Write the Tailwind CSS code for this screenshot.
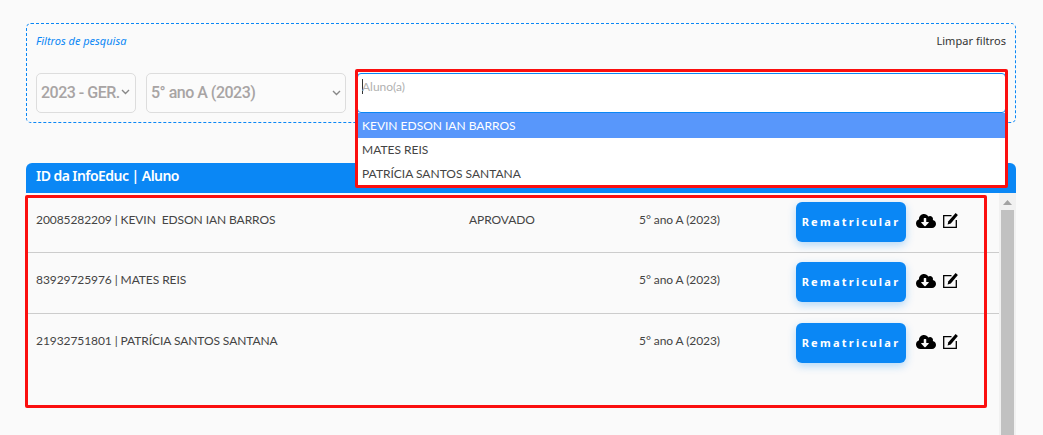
<!doctype html>
<html lang="pt">
<head>
<meta charset="utf-8">
<script src="https://cdn.jsdelivr.net/npm/@tailwindcss/browser@4"></script>
</head>
<body class="bg-[#fafafa] font-['Lato',sans-serif] text-[#444] overflow-hidden">
<div class="relative w-[1043px] h-[435px] overflow-hidden pl-[26px] pr-[27px] pt-[23px]">
  <!-- filters -->
  <section class="relative h-[100px] rounded-[5px] border border-dashed border-[#0a87f5] px-[9px]">
    <div class="flex justify-between pt-[9px] h-[49px]">
      <span class="font-['Noto_Sans',sans-serif] italic text-[#0a87f5] text-[11px] leading-[16px]">Filtros de pesquisa</span>
      <span class="font-['Noto_Sans',sans-serif] text-[#333] text-[11px] tracking-[0.05px] leading-[16px]">Limpar filtros</span>
    </div>
    <div class="flex gap-[10px] items-start">
      <div class="w-[100px] h-[40px] rounded-[5px] border border-[#ddd] bg-[#fbfbfb] pl-[4px] flex items-center justify-between pr-[5px] font-['Roboto',sans-serif] font-medium text-[16px] tracking-[-0.5px] text-[#a8a4a4]">
        <span class="whitespace-nowrap">2023 - GER.</span>
        <svg width="9" height="6" viewBox="0 0 9 6" fill="none" stroke="#888" stroke-width="1.4" class="-mt-[3px]"><path d="M1 1l3.5 3.5L8 1"/></svg>
      </div>
      <div class="w-[200px] h-[40px] rounded-[5px] border border-[#ddd] bg-[#fbfbfb] pl-[4px] flex items-center justify-between pr-[4px] font-['Roboto',sans-serif] font-medium text-[16px] tracking-[-0.5px] text-[#a8a4a4]">
        <span>5° ano A (2023)</span>
        <svg width="9" height="6" viewBox="0 0 9 6" fill="none" stroke="#888" stroke-width="1.4"><path d="M1 1l3.5 3.5L8 1"/></svg>
      </div>
      <div class="relative ml-px w-[649px]">
        <div class="h-[40px] rounded-[4px] border border-[#0a87f5] bg-white pl-[4px] pt-[4px] text-[12px] leading-[18px] text-[#b0b0b0] flex items-start">
          <span class="inline-block w-px h-[15px] bg-[#333] mt-px"></span><span class="-ml-px">Aluno(a)</span>
        </div>
        <ul class="absolute left-0 right-0 top-[40px] z-10 h-[73px] bg-white text-[12px] text-[#444]">
          <li class="h-[25px] bg-[#5897fb] text-white pl-[5px] leading-[25px]">KEVIN EDSON IAN BARROS</li>
          <li class="h-[24px] pl-[5px] leading-[24px]">MATES REIS</li>
          <li class="h-[24px] pl-[5px] leading-[24px]">PATRÍCIA SANTOS SANTANA</li>
        </ul>
      </div>
    </div>
  </section>

  <!-- table -->
  <section class="mt-[40px]">
    <div class="h-[30px] rounded-t-[6px] bg-[#0a87f5] px-[10px] font-['Noto_Sans',sans-serif] font-semibold text-[14px] tracking-[-0.55px] leading-[26px] text-white">ID da InfoEduc | Aluno</div>
    <div class="flex">
      <div class="w-[973px] text-[12px] tracking-[-0.08px] text-[#444]">
        <div class="h-[60px] border-b border-[#ccc] grid grid-cols-[433px_170px_157px_auto] pl-[10px] pt-[9px]">
          <span class="pt-[9px] leading-[18px]">20085282209 | KEVIN&nbsp; EDSON IAN BARROS</span>
          <span class="pt-[9px] leading-[18px]">APROVADO</span>
          <span class="pt-[9px] leading-[18px]">5° ano A (2023)</span>
          <div class="flex items-start">
            <button class="w-[110px] h-[40px] rounded-[6px] bg-[#0a87f5] shadow-[0_3px_8px_rgba(10,135,245,0.3)] font-['Noto_Sans',sans-serif] font-bold text-[11px] tracking-[2.25px] text-white">Rematricular</button>
            <svg class="ml-[10px] mt-[11px]" width="20" height="16" viewBox="0 0 640 512"><path fill="#000" d="M537.6 226.6c4.1-10.7 6.4-22.4 6.4-34.6 0-53-43-96-96-96-19.7 0-38.1 6-53.3 16.2C367 64.2 315.3 32 256 32c-88.4 0-160 71.6-160 160 0 2.700.1 5.400.2 8.100C40.200 219.800 0 273.200 0 336c0 79.500 64.500 144 144 144h368c70.700 0 128-57.300 128-128 0-61.900-44-113.600-102.400-125.400zm-132.900 88.700L299.300 420.700c-6.200 6.200-16.400 6.200-22.600 0L171.300 315.300c-10.100-10.100-2.900-27.300 11.300-27.300H248V176c0-8.800 7.200-16 16-16h48c8.800 0 16 7.200 16 16v112h65.400c14.200 0 21.400 17.200 11.300 27.300z"/></svg>
            <svg class="ml-[7px] mt-[10px]" width="15" height="16" viewBox="0 0 15 16" fill="none"><path d="M8.500 3.600H.7v11.700h12.600V8" stroke="#000" stroke-width="1.300"/><path fill="#000" d="M4.600 12.400l.8-3.200L12.600.9 14.900 3.100 7.800 11.400z"/></svg>
          </div>
        </div>
        <div class="h-[61px] border-b border-[#ccc] grid grid-cols-[433px_170px_157px_auto] pl-[10px] pt-[9px]">
          <span class="pt-[9px] leading-[18px]">83929725976 | MATES REIS</span>
          <span></span>
          <span class="pt-[9px] leading-[18px]">5° ano A (2023)</span>
          <div class="flex items-start">
            <button class="w-[110px] h-[40px] rounded-[6px] bg-[#0a87f5] shadow-[0_3px_8px_rgba(10,135,245,0.3)] font-['Noto_Sans',sans-serif] font-bold text-[11px] tracking-[2.25px] text-white">Rematricular</button>
            <svg class="ml-[10px] mt-[11px]" width="20" height="16" viewBox="0 0 640 512"><path fill="#000" d="M537.6 226.6c4.1-10.7 6.4-22.4 6.4-34.6 0-53-43-96-96-96-19.7 0-38.1 6-53.3 16.2C367 64.2 315.3 32 256 32c-88.4 0-160 71.6-160 160 0 2.700.1 5.400.2 8.100C40.200 219.800 0 273.200 0 336c0 79.500 64.500 144 144 144h368c70.700 0 128-57.300 128-128 0-61.900-44-113.600-102.400-125.400zm-132.900 88.700L299.300 420.700c-6.200 6.200-16.400 6.200-22.600 0L171.300 315.300c-10.100-10.100-2.900-27.300 11.300-27.300H248V176c0-8.800 7.200-16 16-16h48c8.800 0 16 7.200 16 16v112h65.400c14.200 0 21.400 17.200 11.300 27.300z"/></svg>
            <svg class="ml-[7px] mt-[10px]" width="15" height="16" viewBox="0 0 15 16" fill="none"><path d="M8.500 3.600H.7v11.700h12.600V8" stroke="#000" stroke-width="1.300"/><path fill="#000" d="M4.600 12.400l.8-3.200L12.600.9 14.900 3.100 7.800 11.400z"/></svg>
          </div>
        </div>
        <div class="h-[60px] grid grid-cols-[433px_170px_157px_auto] pl-[10px] pt-[9px]">
          <span class="pt-[9px] leading-[18px]">21932751801 | PATRÍCIA SANTOS SANTANA</span>
          <span></span>
          <span class="pt-[9px] leading-[18px]">5° ano A (2023)</span>
          <div class="flex items-start">
            <button class="w-[110px] h-[40px] rounded-[6px] bg-[#0a87f5] shadow-[0_3px_8px_rgba(10,135,245,0.3)] font-['Noto_Sans',sans-serif] font-bold text-[11px] tracking-[2.25px] text-white">Rematricular</button>
            <svg class="ml-[10px] mt-[11px]" width="20" height="16" viewBox="0 0 640 512"><path fill="#000" d="M537.6 226.6c4.1-10.7 6.4-22.4 6.4-34.6 0-53-43-96-96-96-19.7 0-38.1 6-53.3 16.2C367 64.2 315.3 32 256 32c-88.4 0-160 71.6-160 160 0 2.700.1 5.400.2 8.100C40.200 219.800 0 273.200 0 336c0 79.500 64.500 144 144 144h368c70.700 0 128-57.300 128-128 0-61.900-44-113.600-102.400-125.400zm-132.900 88.700L299.300 420.700c-6.200 6.200-16.400 6.200-22.600 0L171.300 315.300c-10.100-10.100-2.900-27.300 11.300-27.300H248V176c0-8.800 7.200-16 16-16h48c8.800 0 16 7.200 16 16v112h65.400c14.200 0 21.400 17.200 11.300 27.300z"/></svg>
            <svg class="ml-[7px] mt-[10px]" width="15" height="16" viewBox="0 0 15 16" fill="none"><path d="M8.500 3.600H.7v11.700h12.600V8" stroke="#000" stroke-width="1.300"/><path fill="#000" d="M4.600 12.400l.8-3.200L12.600.9 14.900 3.100 7.800 11.400z"/></svg>
          </div>
        </div>
      </div>
      <div class="w-[17px] h-[242px] bg-[#f1f1f1] flex flex-col items-center">
        <svg class="mt-[7px]" width="9" height="5" viewBox="0 0 9 5"><path fill="#a3a3a3" d="M4.500 0L9 5H0z"/></svg>
        <div class="mt-[5px] w-[13px] flex-1 bg-[#c1c1c1]"></div>
      </div>
    </div>
  </section>

  <!-- annotation rectangles -->
  <div class="absolute z-20 left-[355px] top-[69px] w-[653px] h-[119px] border-[3px] border-[#fb0f0f] rounded-[2px]"></div>
  <div class="absolute z-20 left-[25px] top-[195px] w-[962px] h-[213px] border-[3px] border-[#fb0f0f] rounded-[2px]"></div>
</div>
</body>
</html>
